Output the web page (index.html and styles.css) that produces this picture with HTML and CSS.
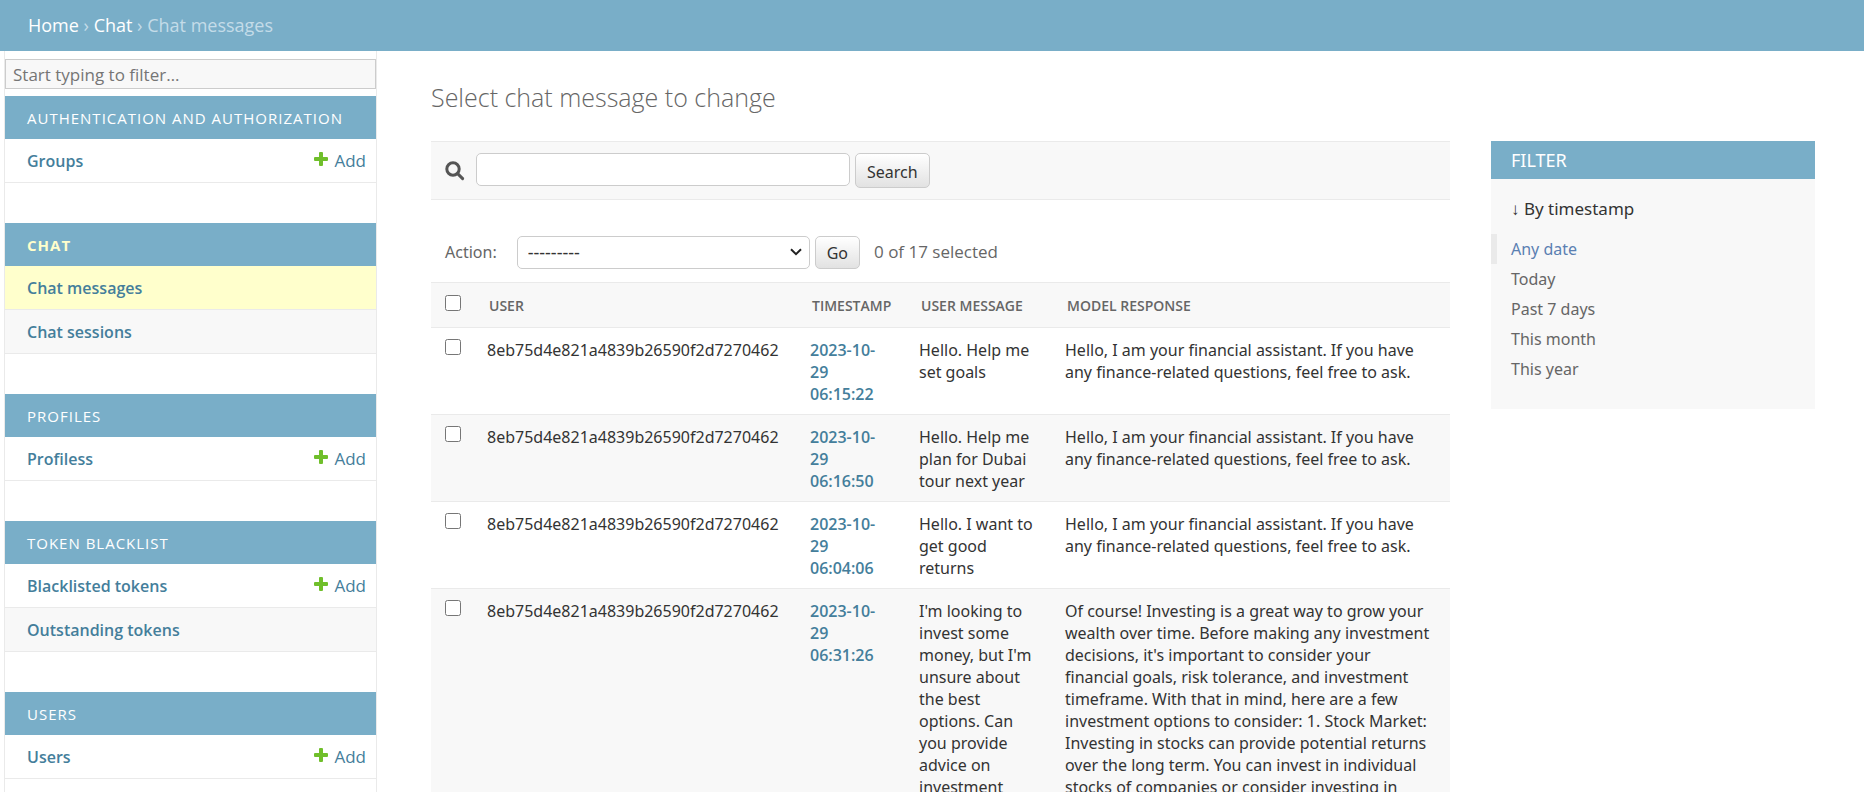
FILE: index.html
```html
<!DOCTYPE html>
<html lang="en">
<head>
<meta charset="utf-8">
<title>Select chat message to change</title>
<link rel="stylesheet" href="styles.css">
</head>
<body>
<svg class="defs" aria-hidden="true">
  <symbol id="plus" viewBox="0 0 14 14"><path d="M6 0h2q1 0 1 1v4h4q1 0 1 1v2q0 1-1 1H9v4q0 1-1 1H6q-1 0-1-1V9H1q-1 0-1-1V6q0-1 1-1h4V1q0-1 1-1z"/></symbol>
</svg>
<nav class="breadcrumbs" aria-label="Breadcrumbs"><a href="#">Home</a> › <a href="#">Chat</a> › Chat messages</nav>
<div class="main">
  <nav class="sidebar" aria-label="Sidebar">
    <input class="nav-filter" type="search" placeholder="Start typing to filter…" aria-label="Filter navigation items">
    <section class="app">
      <h2><a href="#">Authentication and Authorization</a></h2>
      <div class="model"><a class="name" href="#">Groups</a><a class="add" href="#"><svg><use href="#plus"/></svg>Add</a></div>
    </section>
    <section class="app current">
      <h2><a href="#">Chat</a></h2>
      <div class="model selected"><a class="name" href="#">Chat messages</a></div>
      <div class="model"><a class="name" href="#">Chat sessions</a></div>
    </section>
    <section class="app">
      <h2><a href="#">Profiles</a></h2>
      <div class="model"><a class="name" href="#">Profiless</a><a class="add" href="#"><svg><use href="#plus"/></svg>Add</a></div>
    </section>
    <section class="app">
      <h2><a href="#">Token Blacklist</a></h2>
      <div class="model"><a class="name" href="#">Blacklisted tokens</a><a class="add" href="#"><svg><use href="#plus"/></svg>Add</a></div>
      <div class="model"><a class="name" href="#">Outstanding tokens</a></div>
    </section>
    <section class="app">
      <h2><a href="#">Users</a></h2>
      <div class="model"><a class="name" href="#">Users</a><a class="add" href="#"><svg><use href="#plus"/></svg>Add</a></div>
    </section>
  </nav>
  <main class="content">
    <h1>Select chat message to change</h1>
    <div class="changelist">
      <div class="results">
        <form class="search">
          <label for="searchbar" aria-label="Search"><svg class="glass" viewBox="0 0 20 20"><circle cx="8" cy="8" r="6.2"/><path d="M12.6 12.6 17.6 17.6"/></svg></label>
          <input id="searchbar" type="text">
          <button type="submit">Search</button>
        </form>
        <form class="actions">
          <label for="action">Action:</label>
          <select id="action"><option>---------</option><option>Delete selected chat messages</option></select>
          <button type="submit">Go</button>
          <span class="counter">0 of 17 selected</span>
        </form>
        <table>
          <colgroup><col class="c-check"><col class="c-user"><col class="c-time"><col class="c-message"><col></colgroup>
          <thead>
            <tr><th><input type="checkbox" aria-label="Select all"></th><th>User</th><th>Timestamp</th><th>User message</th><th>Model response</th></tr>
          </thead>
          <tbody>
            <tr>
              <td><input type="checkbox" aria-label="Select row 1"></td>
              <td>8eb75d4e821a4839b26590f2d7270462</td>
              <td><a href="#">2023-10-<br>29<br>06:15:22</a></td>
              <td>Hello. Help me<br>set goals</td>
              <td>Hello, I am your financial assistant. If you have<br>any finance-related questions, feel free to ask.</td>
            </tr>
            <tr>
              <td><input type="checkbox" aria-label="Select row 2"></td>
              <td>8eb75d4e821a4839b26590f2d7270462</td>
              <td><a href="#">2023-10-<br>29<br>06:16:50</a></td>
              <td>Hello. Help me<br>plan for Dubai<br>tour next year</td>
              <td>Hello, I am your financial assistant. If you have<br>any finance-related questions, feel free to ask.</td>
            </tr>
            <tr>
              <td><input type="checkbox" aria-label="Select row 3"></td>
              <td>8eb75d4e821a4839b26590f2d7270462</td>
              <td><a href="#">2023-10-<br>29<br>06:04:06</a></td>
              <td>Hello. I want to<br>get good<br>returns</td>
              <td>Hello, I am your financial assistant. If you have<br>any finance-related questions, feel free to ask.</td>
            </tr>
            <tr>
              <td><input type="checkbox" aria-label="Select row 4"></td>
              <td>8eb75d4e821a4839b26590f2d7270462</td>
              <td><a href="#">2023-10-<br>29<br>06:31:26</a></td>
              <td>I'm looking to<br>invest some<br>money, but I'm<br>unsure about<br>the best<br>options. Can<br>you provide<br>advice on<br>investment</td>
              <td>Of course! Investing is a great way to grow your<br>wealth over time. Before making any investment<br>decisions, it's important to consider your<br>financial goals, risk tolerance, and investment<br>timeframe. With that in mind, here are a few<br>investment options to consider: 1. Stock Market:<br>Investing in stocks can provide potential returns<br>over the long term. You can invest in individual<br>stocks of companies or consider investing in</td>
            </tr>
          </tbody>
        </table>
      </div>
      <aside class="filter">
        <h2>Filter</h2>
        <h3>↓ By timestamp</h3>
        <ul>
          <li class="selected"><a href="#">Any date</a></li>
          <li><a href="#">Today</a></li>
          <li><a href="#">Past 7 days</a></li>
          <li><a href="#">This month</a></li>
          <li><a href="#">This year</a></li>
        </ul>
      </aside>
    </div>
  </main>
</div>
</body>
</html>
```
FILE: styles.css
```css
* { box-sizing: border-box; }

body {
  margin: 0;
  height: 100vh;
  display: flex;
  flex-direction: column;
  overflow: hidden;
  background: #fff;
  color: #333;
  font: 16px/22px "Noto Sans", "Open Sans", sans-serif;
}

h1, h2, h3, ul { margin: 0; padding: 0; font-weight: 400; }
ul { list-style: none; }
a { color: #447e9b; text-decoration: none; }
input, select, button { font: inherit; color: inherit; }
.defs { display: none; }

.breadcrumbs {
  flex: none;
  padding: 14px 28px 15px;
  background: #79aec8;
  color: #c4dce8;
  font: 18px/22px "Open Sans", sans-serif;
}
.breadcrumbs a { color: #fff; }

.main { flex: 1; min-height: 0; display: flex; }

/* Sidebar */
.sidebar {
  flex: none;
  width: 373px;
  margin-left: 4px;
  padding-top: 8px;
  border: solid #eaeaea;
  border-width: 0 1px;
  overflow: hidden;
}
.nav-filter {
  display: block;
  width: 100%;
  height: 30px;
  margin-bottom: 7px;
  padding: 0 7px;
  border: 1px solid #ccc;
  background: #f8f8f8;
  font-family: "Open Sans", sans-serif;
  font-size: 17px;
  appearance: none;
  outline: none;
}
.nav-filter::placeholder { color: #757575; opacity: 1; }
.app { margin-bottom: 40px; }
.app h2 {
  height: 43px;
  padding: 11px 22px 10px;
  background: #79aec8;
  font-family: "Open Sans", sans-serif;
  font-size: 15px;
  letter-spacing: 1px;
  text-transform: uppercase;
}
.app h2 a { color: #fff; }
.current h2 a { color: #ffc; font-weight: 700; }
.model {
  display: flex;
  justify-content: space-between;
  height: 44px;
  padding: 11px 10px 10px 22px;
  border-bottom: 1px solid #eaeaea;
}
.model:nth-of-type(even) { background: #f8f8f8; }
.model.selected { background: #ffc; }
.name { font-family: "Open Sans", sans-serif; font-weight: 600; }
.add { display: flex; gap: 6px; font-family: "Open Sans", sans-serif; font-size: 17px; }
.add svg { width: 14px; height: 14px; margin-top: 2px; fill: #70bf2b; }

/* Content */
.content {
  flex: 1;
  min-width: 0;
  padding: 29px 49px 0 54px;
  overflow: hidden;
}
h1 {
  margin-bottom: 27px;
  color: #666;
  font-family: "Open Sans", sans-serif;
  font-size: 25px;
  font-weight: 300;
  line-height: 34px;
}
.changelist { display: flex; align-items: flex-start; gap: 41px; }
.results { flex: 1; min-width: 0; }

.search {
  display: flex;
  height: 59px;
  padding: 11px 14px;
  border: solid #eaeaea;
  border-width: 1px 0;
  background: #f8f8f8;
}
.glass {
  display: block;
  width: 20px;
  height: 20px;
  margin: 8px 11px 0 0;
  fill: none;
  stroke: #555;
  stroke-width: 3;
  stroke-linecap: round;
}
.search input {
  width: 374px;
  height: 33px;
  padding: 0 8px;
  border: 1px solid #ccc;
  border-radius: 5px;
  background: #fff;
}
button {
  height: 33px;
  margin-left: 5px;
  padding: 2px 11px 0;
  border: 1px solid #ccc;
  border-radius: 5px;
  background: linear-gradient(#fff, #e2e2e2);
}
.search button { height: 35px; }

.actions {
  display: flex;
  align-items: center;
  height: 82px;
  padding: 22px 14px 0;
  color: #666;
}
.actions select {
  width: 293px;
  height: 33px;
  margin-left: 20px;
  padding: 0 10px;
  border: 1px solid #ccc;
  border-radius: 5px;
  background: #fff url("data:image/svg+xml,%3Csvg xmlns='http://www.w3.org/2000/svg' viewBox='0 0 12 8'%3E%3Cpath d='M1 1.2 6 6.2 11 1.2' fill='none' stroke='%23222' stroke-width='2'/%3E%3C/svg%3E") no-repeat right 7px center / 12px 8px;
  color: #333;
  font-size: 18px;
  appearance: none;
}
.actions button { color: #333; }
.counter { margin-left: 14px; font-family: "Open Sans", sans-serif; font-size: 17px; }

table { width: 100%; border-collapse: collapse; table-layout: fixed; }
.c-check { width: 46px; }
.c-user { width: 323px; }
.c-time { width: 109px; }
.c-message { width: 146px; }
th, td {
  padding: 11px 10px 9px;
  border-bottom: 1px solid #eaeaea;
  text-align: left;
  vertical-align: top;
}
td { white-space: nowrap; }
th {
  padding: 12px 12px 10px;
  border-top: 1px solid #eaeaea;
  background: #f8f8f8;
  color: #666;
  font-family: "Open Sans", sans-serif;
  font-size: 14px;
  font-weight: 600;
  text-transform: uppercase;
  white-space: nowrap;
}
tbody tr:nth-child(even) { background: #f8f8f8; }
td a { font-weight: 600; font-family: "Open Sans", sans-serif; }
td:first-child, th:first-child { padding-left: 14px; }
table input { display: block; width: 16px; height: 16px; margin: 0; }

.filter {
  flex: none;
  width: 324px;
  padding-bottom: 25px;
  background: #f8f8f8;
}
.filter h2 {
  padding: 8px 20px;
  background: #79aec8;
  color: #fff;
  font-size: 18px;
  text-transform: uppercase;
}
.filter h3 { padding: 19px 20px 14px; font-size: 17px; }
.filter li { padding: 4px 14px; border-left: 6px solid transparent; }
.filter li a { color: #666; }
.filter li.selected { border-color: #eaeaea; }
.filter li.selected a { color: #5b80b2; }
```
